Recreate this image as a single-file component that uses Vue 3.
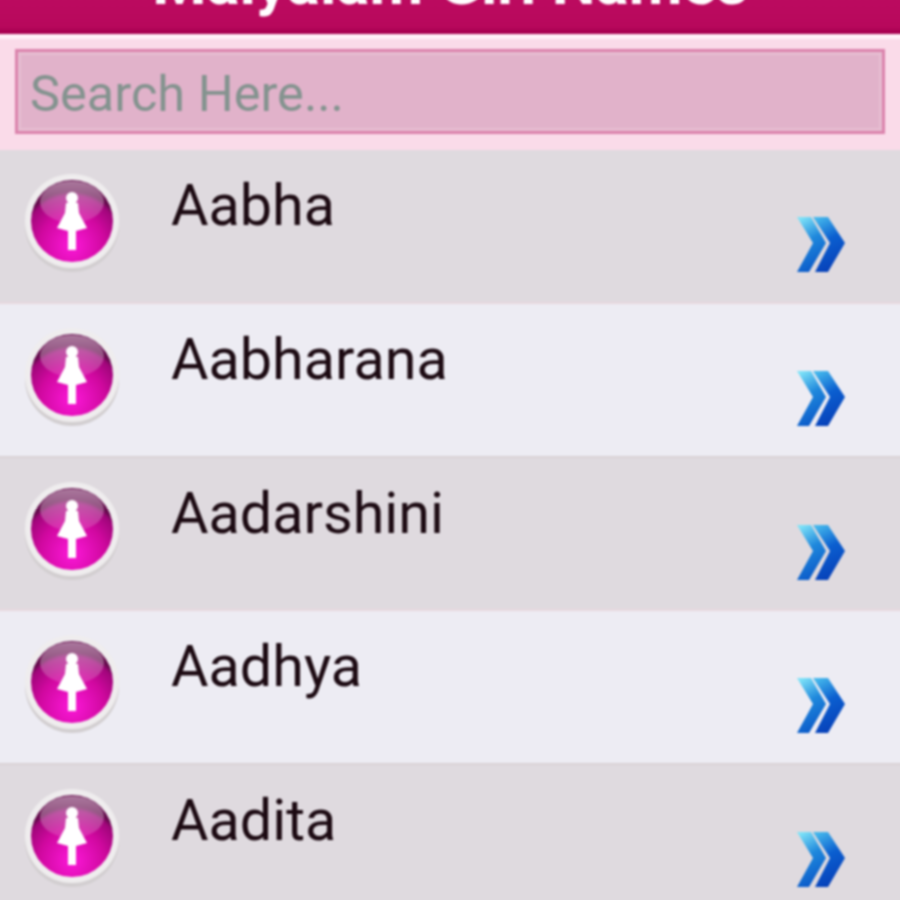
<template>
  <div class="page">
    <div class="header">
      <span class="title">Malyalam Girl Names</span>
    </div>
    <div class="search">
      <div class="input">Search Here...</div>
    </div>
    <div class="list">
      <div class="row" v-for="name in names" :key="name">
        <svg class="avatar" width="100" height="104" viewBox="0 0 100 104">
          <defs>
            <radialGradient id="ball" cx="50%" cy="80%" r="66%">
              <stop offset="0" stop-color="#fb18d8" />
              <stop offset="0.6" stop-color="#d0089f" />
              <stop offset="0.92" stop-color="#a0067a" />
              <stop offset="1" stop-color="#640a4c" />
            </radialGradient>
            <linearGradient id="shine" x1="0" y1="0" x2="0" y2="1">
              <stop offset="0" stop-color="#fff" stop-opacity="0.45" />
              <stop offset="1" stop-color="#fff" stop-opacity="0.12" />
            </linearGradient>
          </defs>
          <circle cx="50" cy="54" r="47" fill="#d2ced0" />
          <circle cx="50" cy="50" r="47" fill="#efedee" />
          <circle cx="50" cy="50" r="41" fill="url(#ball)" />
          <ellipse cx="50" cy="31" rx="32" ry="21" fill="url(#shine)" />
          <circle cx="50" cy="27" r="6" fill="#fff" />
          <path d="M44 32h12l1 10 8 15-11 3v19h-8v-19l-11-3 8-15z" fill="#fff" />
        </svg>
        <span class="name">{{ name }}</span>
        <svg class="arrow" width="50" height="58" viewBox="0 0 50 58">
          <defs>
            <linearGradient id="blue1" x1="0.2" y1="0" x2="0.5" y2="1">
              <stop offset="0" stop-color="#7fe3f8" />
              <stop offset="0.45" stop-color="#1f88dc" />
              <stop offset="1" stop-color="#0a58c8" />
            </linearGradient>
            <linearGradient id="blue2" x1="0.2" y1="0" x2="0.5" y2="1">
              <stop offset="0" stop-color="#45b8ec" />
              <stop offset="0.45" stop-color="#0b5fd0" />
              <stop offset="1" stop-color="#0740b8" />
            </linearGradient>
          </defs>
          <path d="M1 1h14l15 26-17 29H1l16-29z" fill="url(#blue1)" />
          <path d="M17 1h15l17 26-17 29H19l15-29z" fill="url(#blue2)" />
        </svg>
      </div>
    </div>
  </div>
</template>

<script setup>
const names = ['Aabha', 'Aabharana', 'Aadarshini', 'Aadhya', 'Aadita']
</script>

<style>
html,
body {
  margin: 0;
  background: #dfdadf;
  overflow: hidden;
}
</style>

<style scoped>
/* page is 3px oversize on each side so the blur doesn't fade at the window edge */
.page {
  width: 906px;
  height: 906px;
  margin: -3px 0 0 -3px;
  overflow: hidden;
  font-family: Roboto, "Liberation Sans", sans-serif;
  filter: blur(1px);
}
.header {
  height: 37px;
  box-sizing: border-box;
  display: flex;
  justify-content: center;
  align-items: flex-end;
  overflow: hidden;
  background: linear-gradient(#bc0b60, #b8085c 85%, #a80050);
  border-bottom: 2px solid #a80050;
}
.title {
  flex: none;
  color: #fff;
  font-size: 62px;
  font-weight: 700;
  line-height: 64px;
  margin-bottom: 17px;
}
.search {
  height: 116px;
  box-sizing: border-box;
  padding: 10px 18px 0;
  background: #fadbe9;
  border-top: 5px solid #fff0f7;
}
.input {
  height: 85px;
  box-sizing: border-box;
  padding: 3px 0 0 12px;
  display: flex;
  align-items: center;
  border: 3px solid #db82ac;
  box-shadow: inset 0 0 0 3px #e6bdd1;
  background: #e1b2ca;
  color: #84938f;
  font-size: 50.5px;
}
.row {
  height: 153.75px;
  box-sizing: border-box;
  display: flex;
  align-items: flex-start;
  background: #dfdadf;
  border-bottom: 2px solid #e8d8de;
}
.row:nth-child(even) {
  background: #edecf3;
  border-bottom-color: #d9d2d6;
}
.avatar {
  flex: none;
  margin: 21px 0 0 25px;
}
.name {
  margin: 20px 0 0 49px;
  color: #1c0a12;
  font-size: 57.5px;
  line-height: 72px;
}
.arrow {
  flex: none;
  margin: 66px 57px 0 auto;
}
</style>
